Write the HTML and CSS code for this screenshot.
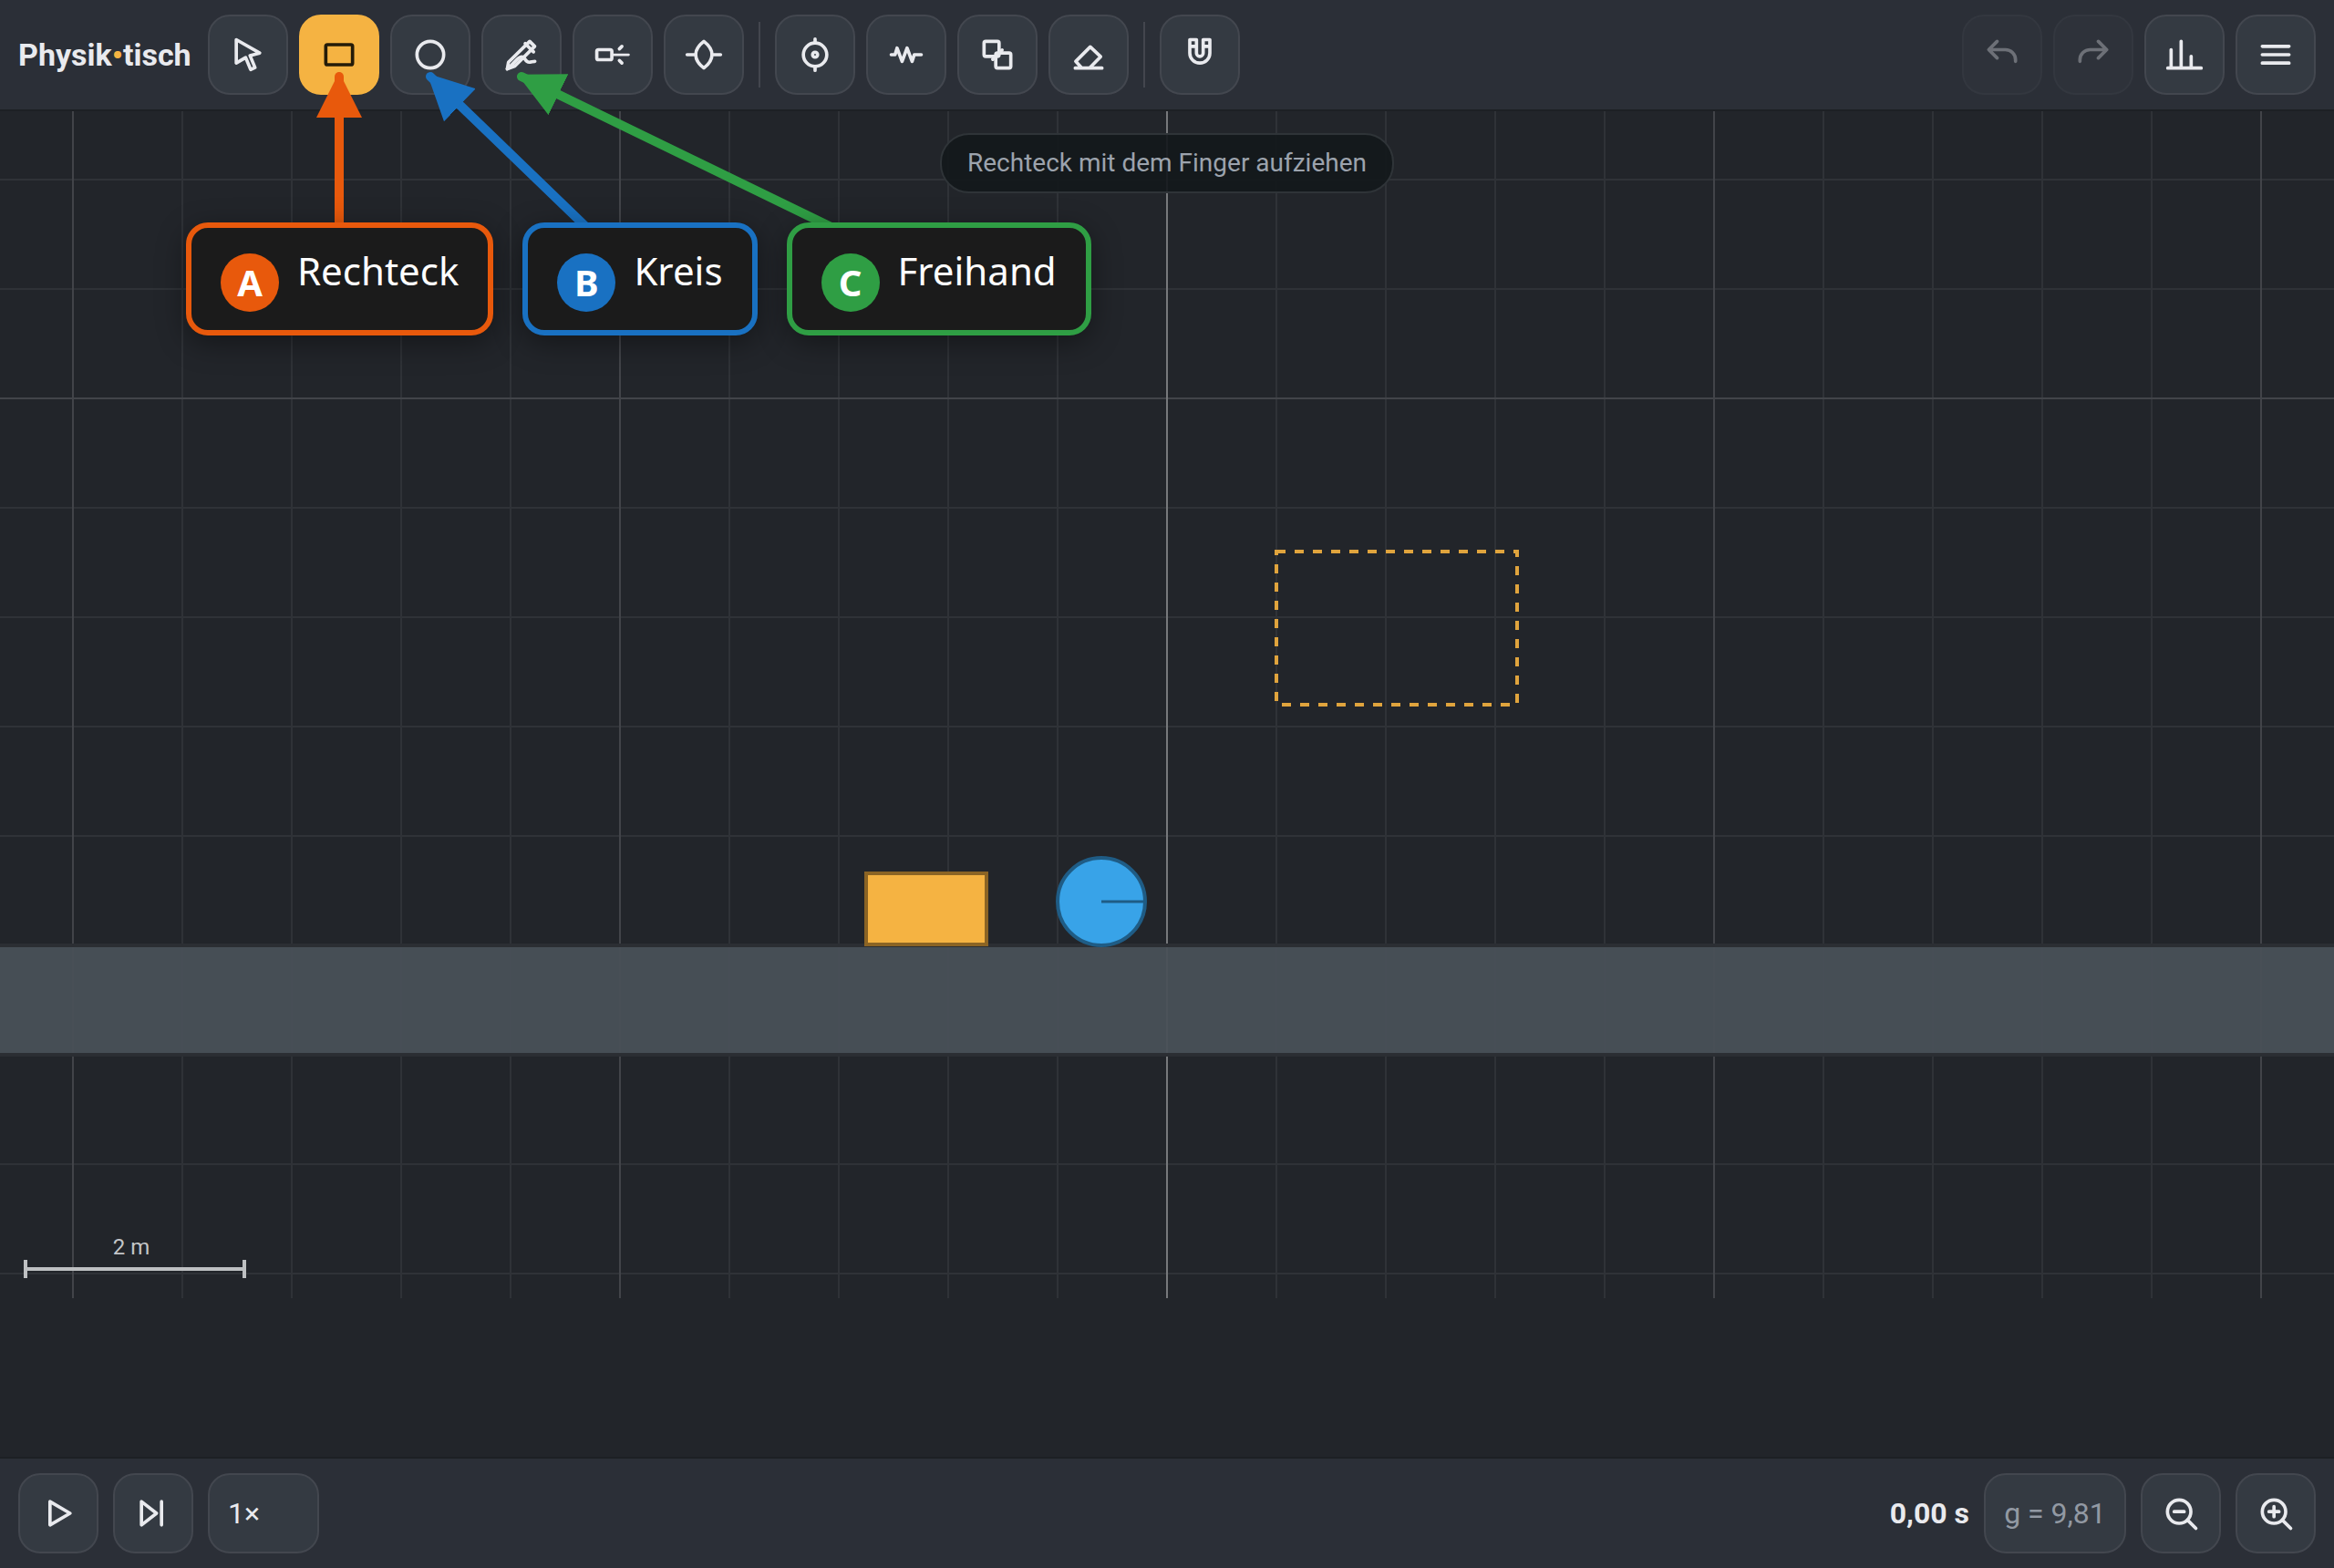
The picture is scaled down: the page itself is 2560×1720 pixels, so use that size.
FILE: index.html
```html
<!DOCTYPE html>
<html lang="de">
<head>
<meta charset="UTF-8">
<meta name="viewport" content="width=device-width, initial-scale=1.0">
<title>Physiktisch</title>
<link rel="stylesheet" href="styles.css">
</head>
<body>
<header class="bar topbar">
    <h1 class="brand">Physik<span class="dot">•</span>tisch</h1>
    <button class="btn" aria-label="Auswahl"><svg class="icon" viewBox="0 0 24 24"><path d="M5 3l14 8-5.8 1.5 3 7.2-2.6 1.2-3-7.2L5 17z"/></svg></button>
    <button class="btn active" aria-label="Rechteck"><svg class="icon" viewBox="0 0 24 24"><rect x="4" y="6" width="16" height="12" rx="1"/></svg></button>
    <button class="btn" aria-label="Kreis"><svg class="icon" viewBox="0 0 24 24"><circle cx="12" cy="12" r="8"/></svg></button>
    <button class="btn" aria-label="Freihand"><svg class="icon" viewBox="0 0 24 24"><path d="M3.500 20.500l.7-4L16.900 4l3 3L8 18.800z"/><path d="M14.200 5.300l5 5"/><path d="M3.500 20.500C7 18 9.500 13.300 12 13.300s2 3.200 4.500 3.200c1.500 0 2-.5 3.500-.5"/></svg></button>
    <button class="btn" aria-label="Laser"><svg class="icon" viewBox="0 0 24 24"><rect x="2.500" y="9" width="9" height="6" rx="1"/><path d="M16 8.500l1.500-1.500M16 15.500l1.500 1.500"/><path class="thin" d="M12 12h9.500"/></svg></button>
    <button class="btn" aria-label="Linse"><svg class="icon" viewBox="0 0 24 24"><path d="M12 4c6.500 5 6.500 11 0 16-6.500-5-6.500-11 0-16zM2 12h5M17 12h5"/></svg></button>
    <span class="sep"></span>
    <button class="btn" aria-label="Drehpunkt"><svg class="icon" viewBox="0 0 24 24"><circle cx="12" cy="12" r="7"/><circle cx="12" cy="12" r="1.500"/><path d="M12 2.600V5M12 19v2.400"/></svg></button>
    <button class="btn" aria-label="Feder"><svg class="icon" viewBox="0 0 24 24"><path d="M3 12h2.300l1.200-4 3 8 3-8 3 8 1.300-4H21"/></svg></button>
    <button class="btn" aria-label="Verbinden"><svg class="icon" viewBox="0 0 24 24"><rect x="4" y="4" width="9" height="9" rx="1"/><rect x="11" y="11" width="9" height="9" rx="1"/><path d="M9.200 14.800l5.600-5.600"/></svg></button>
    <button class="btn" aria-label="Radierer"><svg class="icon" viewBox="0 0 24 24"><path d="M4 20h16M8 20l-3.700-4L13 7.300l6.200 5.900-6.700 6.800"/></svg></button>
    <span class="sep"></span>
    <button class="btn" aria-label="Einrasten"><svg class="icon" viewBox="0 0 24 24"><path d="M6 3v8a6 6 0 0 0 12 0V3h-4v8a2 2 0 0 1-4 0V3zM6 7h4M14 7h4"/></svg></button>
    <span class="spacer"></span>
    <button class="btn" aria-label="Rückgängig" disabled><svg class="icon" viewBox="0 0 24 24"><path d="M9 4L4 9l5 5M4 9h10a6 6 0 0 1 6 6v1"/></svg></button>
    <button class="btn" aria-label="Wiederholen" disabled><svg class="icon" viewBox="0 0 24 24"><path d="M15 4l5 5-5 5M20 9H10a6 6 0 0 0-6 6v1"/></svg></button>
    <button class="btn" aria-label="Diagramm"><svg class="icon" viewBox="0 0 24 24"><path d="M2 20h20M4 20V9M10 20V4M16 20v-7"/></svg></button>
    <button class="btn" aria-label="Menü"><svg class="icon" viewBox="0 0 24 24"><path d="M4 7h16M4 12h16M4 17h16"/></svg></button>
</header>

<main class="stage">
    <svg class="world">
        <defs>
            <pattern id="minor" x="-60" y="-60" width="120" height="120" patternUnits="userSpaceOnUse">
                <path class="grid-minor" d="M60 0v120M0 60h120"/>
            </pattern>
            <pattern id="major" x="-300" y="-300" width="600" height="600" patternUnits="userSpaceOnUse">
                <path class="grid-major" d="M300 0v600M0 300h600"/>
            </pattern>
        </defs>
        <!-- origin: middle of the table, on the ground -->
        <svg class="origin" x="50%" y="915">
            <rect x="-3000" y="-915" width="6000" height="1302" fill="url(#minor)"/>
            <rect x="-3000" y="-915" width="6000" height="1302" fill="url(#major)"/>
            <path class="axis" d="M0-915V387"/>
            <rect class="ground" x="-3000" y="0" width="6000" height="120"/>
            <rect class="box" x="-330" y="-79" width="132" height="78"/>
            <circle class="ball" cx="-72" cy="-48" r="48"/>
            <path class="ball-mark" d="M-72-48h47"/>
            <rect class="draft" x="120" y="-432" width="264" height="168"/>
        </svg>
        <path class="scale" d="M28 1270h240M28 1260v20M268 1260v20"/>
        <text class="scale-text" x="144" y="1254">2 m</text>
    </svg>
    <p class="hint">Rechteck mit dem Finger aufziehen</p>
</main>

<footer class="bar bottombar">
    <button class="btn" aria-label="Start"><svg class="icon" viewBox="0 0 24 24"><path d="M7 5v14l12-7z"/></svg></button>
    <button class="btn" aria-label="Einzelschritt"><svg class="icon" viewBox="0 0 24 24"><path d="M5 5v14l9-7zM17 5v14"/></svg></button>
    <select class="btn speed" aria-label="Tempo">
        <option>1×</option>
    </select>
    <span class="spacer"></span>
    <output class="time">0,00 s</output>
    <button class="btn gravity">g = 9,81</button>
    <button class="btn" aria-label="Verkleinern"><svg class="icon" viewBox="0 0 24 24"><circle cx="11" cy="11" r="7"/><path d="M16 16l5 5M8 11h6"/></svg></button>
    <button class="btn" aria-label="Vergrößern"><svg class="icon" viewBox="0 0 24 24"><circle cx="11" cy="11" r="7"/><path d="M16 16l5 5M8 11h6M11 8v6"/></svg></button>
</footer>

<svg class="arrows">
    <defs>
        <marker id="headA" viewBox="0 0 10 10" refX="9" refY="5" markerWidth="5" markerHeight="5" orient="auto"><path class="fill-a" d="M0 0l10 5-10 5z"/></marker>
        <marker id="headB" viewBox="0 0 10 10" refX="9" refY="5" markerWidth="5" markerHeight="5" orient="auto"><path class="fill-b" d="M0 0l10 5-10 5z"/></marker>
        <marker id="headC" viewBox="0 0 10 10" refX="9" refY="5" markerWidth="5" markerHeight="5" orient="auto"><path class="fill-c" d="M0 0l10 5-10 5z"/></marker>
    </defs>
    <path class="arrow line-a" d="M372 306V84" marker-end="url(#headA)"/>
    <path class="arrow line-b" d="M702 306L472 84" marker-end="url(#headB)"/>
    <path class="arrow line-c" d="M1029 306L572 84" marker-end="url(#headC)"/>
</svg>
<div class="callouts">
    <div class="callout a"><b class="badge">A</b><span>Rechteck</span></div>
    <div class="callout b"><b class="badge">B</b><span>Kreis</span></div>
    <div class="callout c"><b class="badge">C</b><span>Freihand</span></div>
</div>
</body>
</html>
```

FILE: styles.css
```css
* {
    box-sizing: border-box;
}
body {
    margin: 0;
    min-height: 100vh;
    display: flex;
    flex-direction: column;
    position: relative;
    background: #22252a;
    color: #e9eaee;
    font-family: Roboto, "Liberation Sans", sans-serif;
    font-size: 32px;
}

/* bars */
.bar {
    display: flex;
    align-items: center;
    padding: 16px 20px;
    background: #2b2f37;
}
.topbar {
    gap: 12px;
    border-bottom: 2px solid #1d2024;
}
.bottombar {
    gap: 16px;
    border-top: 2px solid #1d2024;
}
.brand {
    margin: 0 6px 0 0;
    font-size: 34px;
    font-weight: 700;
}
.dot {
    color: #f5b342;
}
.spacer {
    flex: 1;
}
.sep {
    width: 2px;
    height: 72px;
    margin: 0 4px;
    background: #43464e;
}
.btn {
    display: flex;
    align-items: center;
    justify-content: center;
    width: 88px;
    height: 88px;
    padding: 0;
    border: 2px solid #43474f;
    border-radius: 24px;
    background: #343a42;
    color: inherit;
    font: inherit;
    cursor: pointer;
}
.btn.active {
    background: #f5b342;
    border-color: #f5b342;
    color: #241b08;
}
.btn:disabled {
    opacity: 0.35;
    cursor: default;
}
.icon {
    width: 44px;
    height: 44px;
    fill: none;
    stroke: currentColor;
    stroke-width: 2;
    stroke-linecap: round;
    stroke-linejoin: round;
}
.thin {
    stroke-width: 1.5;
}
.speed {
    appearance: none;
    width: 122px;
    padding: 0 20px;
}
.time {
    font-weight: 700;
}
.gravity {
    width: 156px;
    color: #9299a3;
}

/* table */
.stage {
    flex: 1;
    position: relative;
}
.world {
    display: block;
    width: 100%;
    height: 1302px;
}
.origin {
    overflow: visible;
}
.grid-minor, .grid-major, .axis {
    fill: none;
    stroke: #fff;
    stroke-width: 2;
}
.grid-minor {
    stroke-opacity: 0.06;
}
.grid-major {
    stroke-opacity: 0.09;
}
.axis {
    stroke-opacity: 0.28;
}
.ground {
    fill: #495057;
    fill-opacity: 0.95;
    stroke: #2b2e33;
    stroke-width: 4;
}
.box {
    fill: #f5b342;
    stroke: #8b6424;
    stroke-width: 4;
}
.ball {
    fill: #38a3e8;
    stroke: #1f5c85;
    stroke-width: 4;
}
.ball-mark {
    stroke: #1f5c85;
    stroke-width: 3;
}
.draft {
    fill: none;
    stroke: #e0a43d;
    stroke-width: 4;
    stroke-dasharray: 10 10;
}
.scale {
    fill: none;
    stroke: #bec0c2;
    stroke-width: 4;
}
.scale-text {
    fill: #c4c6c8;
    font-size: 24px;
    text-anchor: middle;
}
.hint {
    position: absolute;
    top: 24px;
    left: 50%;
    transform: translateX(-50%);
    margin: 0;
    padding: 14px 28px;
    border: 2px solid #2f3438;
    border-radius: 32px;
    background: rgba(20, 24, 27, 0.92);
    color: #9ca3ad;
    font-size: 28px;
    line-height: 34px;
    white-space: nowrap;
}

/* callouts over the toolbar */
.arrows {
    position: absolute;
    top: 0;
    left: 0;
    width: 100%;
    height: 400px;
    pointer-events: none;
}
.arrow {
    fill: none;
    stroke-width: 10;
    stroke-linecap: round;
}
.line-a { stroke: #e8590c; }
.line-b { stroke: #1971c2; }
.line-c { stroke: #2f9e44; }
.fill-a { fill: #e8590c; }
.fill-b { fill: #1971c2; }
.fill-c { fill: #2f9e44; }
.callouts {
    position: absolute;
    top: 244px;
    left: 204px;
    display: flex;
    gap: 32px;
}
.callout {
    display: flex;
    gap: 20px;
    padding: 20px 32px;
    border: 6px solid;
    border-radius: 24px;
    background: #1b1b1b;
    box-shadow: 0 8px 32px rgba(0, 0, 0, 0.4);
    font-family: "Noto Sans", sans-serif;
    font-size: 42px;
    line-height: 54px;
}
.callout span {
    color: #fff;
}
.badge {
    display: flex;
    align-items: center;
    justify-content: center;
    width: 64px;
    height: 64px;
    margin-top: 8px;
    border-radius: 50%;
    color: #fff;
    font-size: 40px;
}
.a { border-color: #e8590c; }
.b { border-color: #1971c2; }
.c { border-color: #2f9e44; }
.a .badge { background: #e8590c; }
.b .badge { background: #1971c2; }
.c .badge { background: #2f9e44; }
```
